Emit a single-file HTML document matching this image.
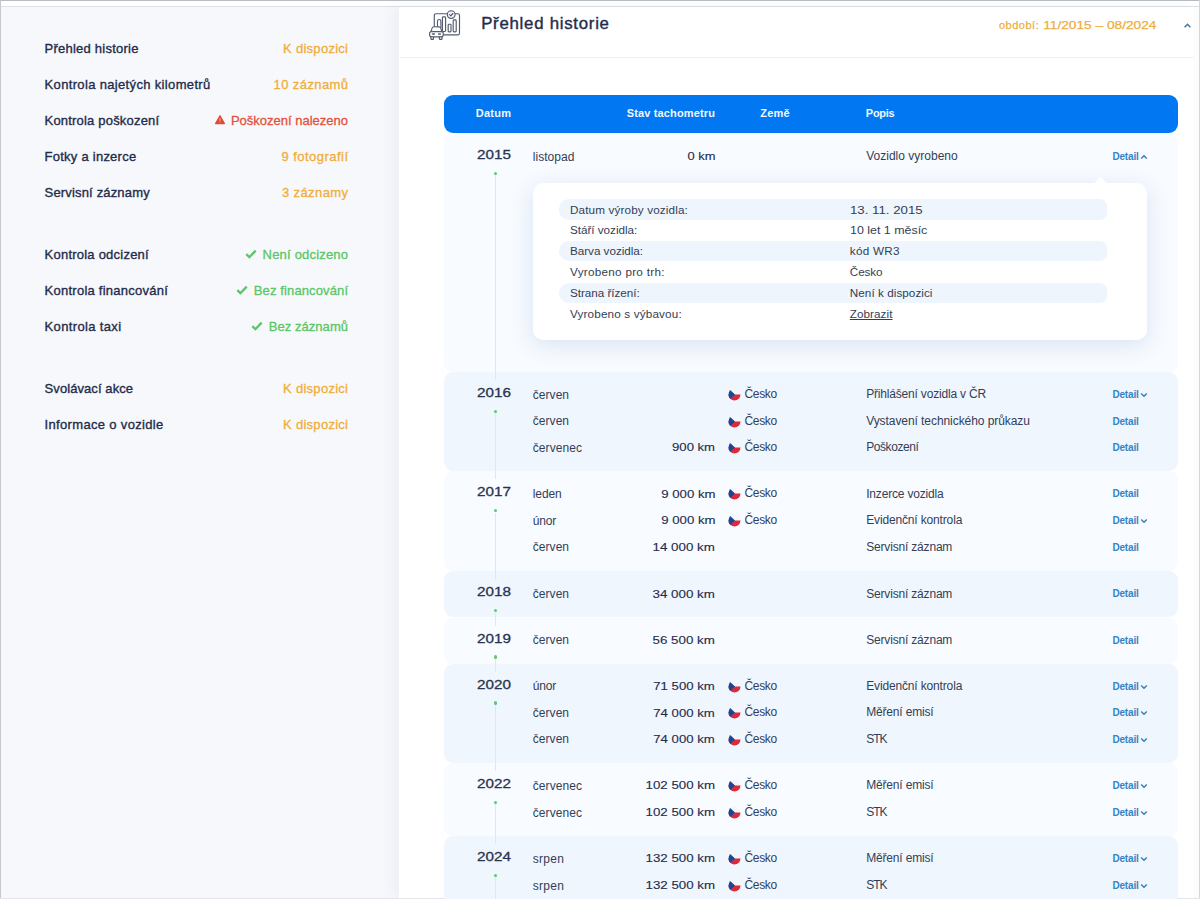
<!DOCTYPE html><html lang="cs"><head><meta charset="utf-8"><title>Přehled historie</title><style>
*{box-sizing:border-box;margin:0;padding:0}
html,body{width:1200px;height:899px;overflow:hidden;background:#f7f8fc;font-family:"Liberation Sans",sans-serif;color:#1f2c4b}
.abs{position:absolute;white-space:nowrap}
.t{position:absolute;white-space:nowrap}
#main{position:absolute;left:399px;top:7px;width:795px;height:892px;background:#fff;box-shadow:-6px 0 14px rgba(40,60,120,.05)}
.hd{position:absolute;left:444px;top:95px;width:734px;height:38px;background:#0178f2;border-radius:9px}
.blk{position:absolute;left:444px;width:734px;border-radius:9px}
.b0{background:#f8fbff}.b1{background:#f0f6fd}
.dot{position:absolute;width:3.4px;height:3.4px;border-radius:50%;background:#63c672;left:493.7px}
.ln{position:absolute;left:495px;width:1px;background:#e2e7ec}
.pop{position:absolute;left:533px;top:182.5px;width:614px;height:157px;background:#fff;border-radius:10px;box-shadow:0 5px 22px rgba(60,110,180,.17)}
.pr{position:absolute;left:558.5px;width:548.5px;height:20.5px;border-radius:10px 7px 7px 10px;background:#eef5fc}
</style></head><body>
<div class="abs" style="left:0;top:0;width:1200px;height:1px;background:#b9bcc3"></div>
<div class="abs" style="left:0;top:1px;width:1200px;height:5px;background:#fff"></div>
<div class="abs" style="left:0;top:6px;width:1200px;height:1px;background:#dcdfe5"></div>
<div id="main"></div>
<div class="abs" style="left:1194px;top:7px;width:5px;height:892px;background:#fcfcfd"></div>
<div class="abs" style="left:0;top:0;width:1px;height:899px;background:#c5c8cf"></div>
<div class="abs" style="left:1199px;top:0;width:1px;height:899px;background:#d4d6db"></div>
<div class="abs" style="left:0;top:898px;width:1200px;height:1px;background:#e3e5ea"></div>
<div class="abs" style="left:400px;top:57px;width:794px;height:1px;background:#eef0f4"></div>
<div class="t" style="top:38.50px;font-size:13px;line-height:20px;height:20px;letter-spacing:0.229px;-webkit-text-stroke:0.35px currentColor;left:44.60px;">Přehled historie</div>
<div class="t" style="top:38.50px;font-size:13px;line-height:20px;height:20px;letter-spacing:0.278px;color:#f0ad3a;-webkit-text-stroke:0.3px currentColor;right:851.72px;">K dispozici</div>
<div class="t" style="top:74.50px;font-size:13px;line-height:20px;height:20px;letter-spacing:0.340px;-webkit-text-stroke:0.35px currentColor;left:44.60px;">Kontrola najetých kilometrů</div>
<div class="t" style="top:74.50px;font-size:13px;line-height:20px;height:20px;letter-spacing:0.397px;color:#f0ad3a;-webkit-text-stroke:0.3px currentColor;right:851.60px;">10 záznamů</div>
<div class="t" style="top:110.50px;font-size:13px;line-height:20px;height:20px;letter-spacing:0.189px;-webkit-text-stroke:0.35px currentColor;left:44.60px;">Kontrola poškození</div>
<div class="t" style="top:110.50px;font-size:13px;line-height:20px;height:20px;color:#e4513b;-webkit-text-stroke:0.3px currentColor;right:852.00px;">Poškození nalezeno</div>
<svg class="abs" style="left:213.6px;top:114.4px" width="12" height="11" viewBox="0 0 12 11"><path d="M6 1.7 L10.4 9.5 H1.6 Z" fill="#e04a35" stroke="#e04a35" stroke-width="1.3" stroke-linejoin="round"/><rect x="5.55" y="4.2" width=".9" height="2.6" fill="#f6c9c2"/><rect x="5.55" y="7.5" width=".9" height=".9" fill="#f6c9c2"/></svg>
<div class="t" style="top:146.50px;font-size:13px;line-height:20px;height:20px;letter-spacing:0.243px;-webkit-text-stroke:0.35px currentColor;left:44.60px;">Fotky a inzerce</div>
<div class="t" style="top:146.50px;font-size:13px;line-height:20px;height:20px;letter-spacing:0.464px;color:#f0ad3a;-webkit-text-stroke:0.3px currentColor;right:851.54px;">9 fotografií</div>
<div class="t" style="top:182.50px;font-size:13px;line-height:20px;height:20px;letter-spacing:0.163px;-webkit-text-stroke:0.35px currentColor;left:44.60px;">Servisní záznamy</div>
<div class="t" style="top:182.50px;font-size:13px;line-height:20px;height:20px;letter-spacing:0.403px;color:#f0ad3a;-webkit-text-stroke:0.3px currentColor;right:851.60px;">3 záznamy</div>
<div class="t" style="top:245.00px;font-size:13px;line-height:20px;height:20px;letter-spacing:0.226px;-webkit-text-stroke:0.35px currentColor;left:44.60px;">Kontrola odcizení</div>
<div class="t" style="top:245.00px;font-size:13px;line-height:20px;height:20px;letter-spacing:0.190px;color:#58c764;-webkit-text-stroke:0.3px currentColor;right:851.81px;">Není odcizeno</div>
<svg class="abs" style="left:244.5px;top:248.5px" width="12" height="10" viewBox="0 0 12 10"><path d="M1.3 5.2 L4.4 8.2 L10.7 1.6" fill="none" stroke="#58c764" stroke-width="2.3"/></svg>
<div class="t" style="top:281.00px;font-size:13px;line-height:20px;height:20px;letter-spacing:0.248px;-webkit-text-stroke:0.35px currentColor;left:44.60px;">Kontrola financování</div>
<div class="t" style="top:281.00px;font-size:13px;line-height:20px;height:20px;letter-spacing:0.119px;color:#58c764;-webkit-text-stroke:0.3px currentColor;right:851.88px;">Bez financování</div>
<svg class="abs" style="left:235.8px;top:284.5px" width="12" height="10" viewBox="0 0 12 10"><path d="M1.3 5.2 L4.4 8.2 L10.7 1.6" fill="none" stroke="#58c764" stroke-width="2.3"/></svg>
<div class="t" style="top:317.00px;font-size:13px;line-height:20px;height:20px;letter-spacing:0.349px;-webkit-text-stroke:0.35px currentColor;left:44.60px;">Kontrola taxi</div>
<div class="t" style="top:317.00px;font-size:13px;line-height:20px;height:20px;letter-spacing:0.049px;color:#58c764;-webkit-text-stroke:0.3px currentColor;right:851.95px;">Bez záznamů</div>
<svg class="abs" style="left:250.8px;top:320.5px" width="12" height="10" viewBox="0 0 12 10"><path d="M1.3 5.2 L4.4 8.2 L10.7 1.6" fill="none" stroke="#58c764" stroke-width="2.3"/></svg>
<div class="t" style="top:378.80px;font-size:13px;line-height:20px;height:20px;letter-spacing:0.076px;-webkit-text-stroke:0.35px currentColor;left:44.60px;">Svolávací akce</div>
<div class="t" style="top:378.80px;font-size:13px;line-height:20px;height:20px;letter-spacing:0.278px;color:#f0ad3a;-webkit-text-stroke:0.3px currentColor;right:851.72px;">K dispozici</div>
<div class="t" style="top:414.90px;font-size:13px;line-height:20px;height:20px;letter-spacing:0.330px;-webkit-text-stroke:0.35px currentColor;left:44.60px;">Informace o vozidle</div>
<div class="t" style="top:414.90px;font-size:13px;line-height:20px;height:20px;letter-spacing:0.278px;color:#f0ad3a;-webkit-text-stroke:0.3px currentColor;right:851.72px;">K dispozici</div>
<svg class="abs" style="left:426px;top:8px" width="40" height="36" viewBox="0 0 40 36" fill="none" stroke="#525c70" stroke-width="1.15" stroke-linecap="round" stroke-linejoin="round">
<path d="M8.3 18.3 V7.2 a1.5 1.5 0 0 1 1.5-1.5 H21.2 M29.2 5.7 H32 a1.5 1.5 0 0 1 1.5 1.5 V25.3 a1.5 1.5 0 0 1-1.5 1.5 H17.9"/>
<circle cx="25.2" cy="6.6" r="3.9" fill="#eef1f6"/><path d="M23.6 6.7 l1.2 1.2 l2.1-2.4"/>
<path d="M11.5 18.2 V13.2 a1.7 1.7 0 0 1 3.4 0 V19.6"/>
<rect x="16.4" y="8.9" width="3.2" height="14.6" rx=".9"/><rect x="22.2" y="16.2" width="2.8" height="7.7" rx=".8"/><rect x="27.2" y="11.9" width="3" height="12" rx=".9"/>
<path d="M4.9 23.6 l1.3-3.7 a1.6 1.6 0 0 1 1.5-1.1 h5.4 a1.6 1.6 0 0 1 1.5 1.1 l1.3 3.7" fill="#fff"/>
<rect x="3.6" y="23.6" width="13.7" height="5.2" rx="2" fill="#fff"/>
<path d="M4.9 28.9 v1.9 a.6 .6 0 0 0 .6 .6 h1.4 a.6 .6 0 0 0 .6-.6 v-1.9 M13.4 28.9 v1.9 a.6 .6 0 0 0 .6 .6 h1.4 a.6 .6 0 0 0 .6-.6 v-1.9"/>
<path d="M6.5 26 h1.8 M12.6 26 h1.8" stroke-width="1.5"/>
</svg>
<div class="t" style="top:12.18px;font-size:16.8px;line-height:24px;height:24px;letter-spacing:0.743px;-webkit-text-stroke:0.4px currentColor;left:481.20px;">Přehled historie</div>
<div class="t" style="top:14.99px;font-size:11px;line-height:20px;height:20px;letter-spacing:0.500px;color:#f0ad3a;-webkit-text-stroke:0.25px currentColor;left:999.00px;">období:</div>
<div class="t" style="top:14.88px;font-size:11.3px;line-height:20px;height:20px;color:#f0ad3a;-webkit-text-stroke:0.25px currentColor;right:43.80px;transform:scaleX(1.2119);transform-origin:100% 0;">11/2015 – 08/2024</div>
<svg class="abs" style="left:1182.5px;top:21.5px" width="9" height="7" viewBox="0 0 9 7"><path d="M1.6 5.2 L4.5 2.3 L7.4 5.2" fill="none" stroke="#4a7aa0" stroke-width="1.6"/></svg>
<div class="blk b0" style="top:133px;height:239.3px"></div>
<div class="blk b1" style="top:372.3px;height:98.9px"></div>
<div class="blk b0" style="top:471.2px;height:100.0px"></div>
<div class="blk b1" style="top:571.2px;height:46.3px"></div>
<div class="blk b0" style="top:617.5px;height:46.0px"></div>
<div class="blk b1" style="top:663.5px;height:99.2px"></div>
<div class="blk b0" style="top:762.7px;height:73.0px"></div>
<div class="blk b1" style="top:835.7px;height:69.3px"></div>
<div class="hd"></div>
<div class="t" style="top:102.99px;font-size:11px;line-height:20px;height:20px;font-weight:700;letter-spacing:0.253px;color:#f1f7ff;left:475.80px;">Datum</div>
<div class="t" style="top:102.99px;font-size:11px;line-height:20px;height:20px;font-weight:700;letter-spacing:0.140px;color:#f1f7ff;right:484.96px;">Stav tachometru</div>
<div class="t" style="top:102.99px;font-size:11px;line-height:20px;height:20px;font-weight:700;letter-spacing:0.213px;color:#f1f7ff;left:760.30px;">Země</div>
<div class="t" style="top:102.99px;font-size:11px;line-height:20px;height:20px;font-weight:700;letter-spacing:-0.251px;color:#f1f7ff;left:865.80px;">Popis</div>
<div class="ln" style="top:175.0px;height:205.3px"></div>
<div class="ln" style="top:413.3px;height:66.2px"></div>
<div class="ln" style="top:512.5px;height:67.0px"></div>
<div class="ln" style="top:612.5px;height:13.2px"></div>
<div class="ln" style="top:658.7px;height:13.1px"></div>
<div class="ln" style="top:704.8px;height:66.3px"></div>
<div class="ln" style="top:804.1px;height:40.0px"></div>
<div class="ln" style="top:877.1px;height:22.9px"></div>
<div class="t" style="top:144.89px;font-size:13.3px;line-height:20px;height:20px;color:#27334f;-webkit-text-stroke:0.3px currentColor;left:476.60px;transform:scaleX(1.1489);transform-origin:0 0;">2015</div>
<div class="dot" style="top:171.6px"></div>
<div class="t" style="top:146.64px;font-size:12px;line-height:20px;height:20px;letter-spacing:0.028px;color:#333e56;left:532.80px;">listopad</div>
<div class="t" style="top:146.28px;font-size:11.3px;line-height:20px;height:20px;-webkit-text-stroke:0.12px currentColor;right:485.00px;transform:scaleX(1.1436);transform-origin:100% 0;">0 km</div>
<div class="t" style="top:146.04px;font-size:12px;line-height:20px;height:20px;letter-spacing:0.006px;color:#333e56;left:866.20px;">Vozidlo vyrobeno</div>
<div class="t" style="top:146.94px;font-size:10px;line-height:20px;height:20px;font-weight:700;letter-spacing:-0.156px;color:#3485c6;left:1112.40px;">Detail</div>
<svg class="abs" style="left:1140.3px;top:153.5px" width="8" height="6" viewBox="0 0 8 6"><path d="M1.2 4.4 L4 1.7 L6.8 4.4" fill="none" stroke="#3b7cb0" stroke-width="1.4"/></svg>
<div class="t" style="top:383.19px;font-size:13.3px;line-height:20px;height:20px;color:#27334f;-webkit-text-stroke:0.3px currentColor;left:476.60px;transform:scaleX(1.1489);transform-origin:0 0;">2016</div>
<div class="dot" style="top:409.9px"></div>
<div class="t" style="top:384.94px;font-size:12px;line-height:20px;height:20px;letter-spacing:0.045px;color:#333e56;left:532.80px;">červen</div>
<svg class="abs" style="left:727.6px;top:388.1px" width="13" height="13" viewBox="0 0 13 13"><defs><clipPath id="c1"><circle cx="6.5" cy="6.5" r="6"/></clipPath></defs><g clip-path="url(#c1)"><rect width="13" height="6.5" fill="#f4f6fa"/><rect y="6.5" width="13" height="6.5" fill="#dc2a3c"/><path d="M0 0 L7 6.5 L0 13 Z" fill="#1c4690"/></g></svg>
<div class="t" style="top:384.24px;font-size:12px;line-height:20px;height:20px;letter-spacing:-0.343px;color:#333e56;left:744.50px;">Česko</div>
<div class="t" style="top:384.34px;font-size:12px;line-height:20px;height:20px;letter-spacing:-0.185px;color:#333e56;left:866.20px;">Přihlášení vozidla v ČR</div>
<div class="t" style="top:385.24px;font-size:10px;line-height:20px;height:20px;font-weight:700;letter-spacing:-0.156px;color:#3485c6;left:1112.40px;">Detail</div>
<svg class="abs" style="left:1140.3px;top:392.2px" width="8" height="6" viewBox="0 0 8 6"><path d="M1.2 1.6 L4 4.3 L6.8 1.6" fill="none" stroke="#3b7cb0" stroke-width="1.4"/></svg>
<div class="t" style="top:411.34px;font-size:12px;line-height:20px;height:20px;letter-spacing:0.045px;color:#333e56;left:532.80px;">červen</div>
<svg class="abs" style="left:727.6px;top:414.5px" width="13" height="13" viewBox="0 0 13 13"><defs><clipPath id="c2"><circle cx="6.5" cy="6.5" r="6"/></clipPath></defs><g clip-path="url(#c2)"><rect width="13" height="6.5" fill="#f4f6fa"/><rect y="6.5" width="13" height="6.5" fill="#dc2a3c"/><path d="M0 0 L7 6.5 L0 13 Z" fill="#1c4690"/></g></svg>
<div class="t" style="top:410.64px;font-size:12px;line-height:20px;height:20px;letter-spacing:-0.343px;color:#333e56;left:744.50px;">Česko</div>
<div class="t" style="top:410.74px;font-size:12px;line-height:20px;height:20px;letter-spacing:-0.067px;color:#333e56;left:866.20px;">Vystavení technického průkazu</div>
<div class="t" style="top:411.63px;font-size:10px;line-height:20px;height:20px;font-weight:700;letter-spacing:-0.156px;color:#3485c6;left:1112.40px;">Detail</div>
<div class="t" style="top:437.74px;font-size:12px;line-height:20px;height:20px;letter-spacing:0.075px;color:#333e56;left:532.80px;">červenec</div>
<div class="t" style="top:437.38px;font-size:11.3px;line-height:20px;height:20px;-webkit-text-stroke:0.12px currentColor;right:485.00px;transform:scaleX(1.1607);transform-origin:100% 0;">900 km</div>
<svg class="abs" style="left:727.6px;top:440.9px" width="13" height="13" viewBox="0 0 13 13"><defs><clipPath id="c3"><circle cx="6.5" cy="6.5" r="6"/></clipPath></defs><g clip-path="url(#c3)"><rect width="13" height="6.5" fill="#f4f6fa"/><rect y="6.5" width="13" height="6.5" fill="#dc2a3c"/><path d="M0 0 L7 6.5 L0 13 Z" fill="#1c4690"/></g></svg>
<div class="t" style="top:437.04px;font-size:12px;line-height:20px;height:20px;letter-spacing:-0.343px;color:#333e56;left:744.50px;">Česko</div>
<div class="t" style="top:437.14px;font-size:12px;line-height:20px;height:20px;letter-spacing:-0.416px;color:#333e56;left:866.20px;">Poškození</div>
<div class="t" style="top:438.04px;font-size:10px;line-height:20px;height:20px;font-weight:700;letter-spacing:-0.156px;color:#3485c6;left:1112.40px;">Detail</div>
<div class="t" style="top:482.39px;font-size:13.3px;line-height:20px;height:20px;color:#27334f;-webkit-text-stroke:0.3px currentColor;left:476.60px;transform:scaleX(1.1489);transform-origin:0 0;">2017</div>
<div class="dot" style="top:509.1px"></div>
<div class="t" style="top:484.14px;font-size:12px;line-height:20px;height:20px;letter-spacing:-0.095px;color:#333e56;left:532.80px;">leden</div>
<div class="t" style="top:483.78px;font-size:11.3px;line-height:20px;height:20px;-webkit-text-stroke:0.12px currentColor;right:485.00px;transform:scaleX(1.1664);transform-origin:100% 0;">9 000 km</div>
<svg class="abs" style="left:727.6px;top:487.3px" width="13" height="13" viewBox="0 0 13 13"><defs><clipPath id="c4"><circle cx="6.5" cy="6.5" r="6"/></clipPath></defs><g clip-path="url(#c4)"><rect width="13" height="6.5" fill="#f4f6fa"/><rect y="6.5" width="13" height="6.5" fill="#dc2a3c"/><path d="M0 0 L7 6.5 L0 13 Z" fill="#1c4690"/></g></svg>
<div class="t" style="top:483.44px;font-size:12px;line-height:20px;height:20px;letter-spacing:-0.343px;color:#333e56;left:744.50px;">Česko</div>
<div class="t" style="top:483.54px;font-size:12px;line-height:20px;height:20px;letter-spacing:-0.183px;color:#333e56;left:866.20px;">Inzerce vozidla</div>
<div class="t" style="top:484.44px;font-size:10px;line-height:20px;height:20px;font-weight:700;letter-spacing:-0.156px;color:#3485c6;left:1112.40px;">Detail</div>
<div class="t" style="top:510.74px;font-size:12px;line-height:20px;height:20px;letter-spacing:-0.158px;color:#333e56;left:532.80px;">únor</div>
<div class="t" style="top:510.38px;font-size:11.3px;line-height:20px;height:20px;-webkit-text-stroke:0.12px currentColor;right:485.00px;transform:scaleX(1.1664);transform-origin:100% 0;">9 000 km</div>
<svg class="abs" style="left:727.6px;top:513.9px" width="13" height="13" viewBox="0 0 13 13"><defs><clipPath id="c5"><circle cx="6.5" cy="6.5" r="6"/></clipPath></defs><g clip-path="url(#c5)"><rect width="13" height="6.5" fill="#f4f6fa"/><rect y="6.5" width="13" height="6.5" fill="#dc2a3c"/><path d="M0 0 L7 6.5 L0 13 Z" fill="#1c4690"/></g></svg>
<div class="t" style="top:510.04px;font-size:12px;line-height:20px;height:20px;letter-spacing:-0.343px;color:#333e56;left:744.50px;">Česko</div>
<div class="t" style="top:510.14px;font-size:12px;line-height:20px;height:20px;letter-spacing:-0.152px;color:#333e56;left:866.20px;">Evidenční kontrola</div>
<div class="t" style="top:511.04px;font-size:10px;line-height:20px;height:20px;font-weight:700;letter-spacing:-0.156px;color:#3485c6;left:1112.40px;">Detail</div>
<svg class="abs" style="left:1140.3px;top:518.0px" width="8" height="6" viewBox="0 0 8 6"><path d="M1.2 1.6 L4 4.3 L6.8 1.6" fill="none" stroke="#3b7cb0" stroke-width="1.4"/></svg>
<div class="t" style="top:537.44px;font-size:12px;line-height:20px;height:20px;letter-spacing:0.045px;color:#333e56;left:532.80px;">červen</div>
<div class="t" style="top:537.08px;font-size:11.3px;line-height:20px;height:20px;-webkit-text-stroke:0.12px currentColor;right:485.00px;transform:scaleX(1.1788);transform-origin:100% 0;">14 000 km</div>
<div class="t" style="top:536.84px;font-size:12px;line-height:20px;height:20px;letter-spacing:-0.180px;color:#333e56;left:866.20px;">Servisní záznam</div>
<div class="t" style="top:537.73px;font-size:10px;line-height:20px;height:20px;font-weight:700;letter-spacing:-0.156px;color:#3485c6;left:1112.40px;">Detail</div>
<div class="t" style="top:582.39px;font-size:13.3px;line-height:20px;height:20px;color:#27334f;-webkit-text-stroke:0.3px currentColor;left:476.60px;transform:scaleX(1.1489);transform-origin:0 0;">2018</div>
<div class="dot" style="top:609.1px"></div>
<div class="t" style="top:584.14px;font-size:12px;line-height:20px;height:20px;letter-spacing:0.045px;color:#333e56;left:532.80px;">červen</div>
<div class="t" style="top:583.78px;font-size:11.3px;line-height:20px;height:20px;-webkit-text-stroke:0.12px currentColor;right:485.00px;transform:scaleX(1.1788);transform-origin:100% 0;">34 000 km</div>
<div class="t" style="top:583.54px;font-size:12px;line-height:20px;height:20px;letter-spacing:-0.180px;color:#333e56;left:866.20px;">Servisní záznam</div>
<div class="t" style="top:584.43px;font-size:10px;line-height:20px;height:20px;font-weight:700;letter-spacing:-0.156px;color:#3485c6;left:1112.40px;">Detail</div>
<div class="t" style="top:628.59px;font-size:13.3px;line-height:20px;height:20px;color:#27334f;-webkit-text-stroke:0.3px currentColor;left:476.60px;transform:scaleX(1.1489);transform-origin:0 0;">2019</div>
<div class="dot" style="top:655.3px"></div>
<div class="t" style="top:630.34px;font-size:12px;line-height:20px;height:20px;letter-spacing:0.045px;color:#333e56;left:532.80px;">červen</div>
<div class="t" style="top:629.98px;font-size:11.3px;line-height:20px;height:20px;-webkit-text-stroke:0.12px currentColor;right:485.00px;transform:scaleX(1.1788);transform-origin:100% 0;">56 500 km</div>
<div class="t" style="top:629.74px;font-size:12px;line-height:20px;height:20px;letter-spacing:-0.180px;color:#333e56;left:866.20px;">Servisní záznam</div>
<div class="t" style="top:630.63px;font-size:10px;line-height:20px;height:20px;font-weight:700;letter-spacing:-0.156px;color:#3485c6;left:1112.40px;">Detail</div>
<div class="t" style="top:674.69px;font-size:13.3px;line-height:20px;height:20px;color:#27334f;-webkit-text-stroke:0.3px currentColor;left:476.60px;transform:scaleX(1.1489);transform-origin:0 0;">2020</div>
<div class="dot" style="top:701.4px"></div>
<div class="t" style="top:676.44px;font-size:12px;line-height:20px;height:20px;letter-spacing:-0.158px;color:#333e56;left:532.80px;">únor</div>
<div class="t" style="top:676.08px;font-size:11.3px;line-height:20px;height:20px;-webkit-text-stroke:0.12px currentColor;right:485.00px;transform:scaleX(1.1655);transform-origin:100% 0;">71 500 km</div>
<svg class="abs" style="left:727.6px;top:679.6px" width="13" height="13" viewBox="0 0 13 13"><defs><clipPath id="c6"><circle cx="6.5" cy="6.5" r="6"/></clipPath></defs><g clip-path="url(#c6)"><rect width="13" height="6.5" fill="#f4f6fa"/><rect y="6.5" width="13" height="6.5" fill="#dc2a3c"/><path d="M0 0 L7 6.5 L0 13 Z" fill="#1c4690"/></g></svg>
<div class="t" style="top:675.74px;font-size:12px;line-height:20px;height:20px;letter-spacing:-0.343px;color:#333e56;left:744.50px;">Česko</div>
<div class="t" style="top:675.84px;font-size:12px;line-height:20px;height:20px;letter-spacing:-0.152px;color:#333e56;left:866.20px;">Evidenční kontrola</div>
<div class="t" style="top:676.73px;font-size:10px;line-height:20px;height:20px;font-weight:700;letter-spacing:-0.156px;color:#3485c6;left:1112.40px;">Detail</div>
<svg class="abs" style="left:1140.3px;top:683.7px" width="8" height="6" viewBox="0 0 8 6"><path d="M1.2 1.6 L4 4.3 L6.8 1.6" fill="none" stroke="#3b7cb0" stroke-width="1.4"/></svg>
<div class="t" style="top:702.94px;font-size:12px;line-height:20px;height:20px;letter-spacing:0.045px;color:#333e56;left:532.80px;">červen</div>
<div class="t" style="top:702.58px;font-size:11.3px;line-height:20px;height:20px;-webkit-text-stroke:0.12px currentColor;right:485.00px;transform:scaleX(1.1655);transform-origin:100% 0;">74 000 km</div>
<svg class="abs" style="left:727.6px;top:706.1px" width="13" height="13" viewBox="0 0 13 13"><defs><clipPath id="c7"><circle cx="6.5" cy="6.5" r="6"/></clipPath></defs><g clip-path="url(#c7)"><rect width="13" height="6.5" fill="#f4f6fa"/><rect y="6.5" width="13" height="6.5" fill="#dc2a3c"/><path d="M0 0 L7 6.5 L0 13 Z" fill="#1c4690"/></g></svg>
<div class="t" style="top:702.24px;font-size:12px;line-height:20px;height:20px;letter-spacing:-0.343px;color:#333e56;left:744.50px;">Česko</div>
<div class="t" style="top:702.34px;font-size:12px;line-height:20px;height:20px;letter-spacing:-0.172px;color:#333e56;left:866.20px;">Měření emisí</div>
<div class="t" style="top:703.23px;font-size:10px;line-height:20px;height:20px;font-weight:700;letter-spacing:-0.156px;color:#3485c6;left:1112.40px;">Detail</div>
<svg class="abs" style="left:1140.3px;top:710.2px" width="8" height="6" viewBox="0 0 8 6"><path d="M1.2 1.6 L4 4.3 L6.8 1.6" fill="none" stroke="#3b7cb0" stroke-width="1.4"/></svg>
<div class="t" style="top:729.44px;font-size:12px;line-height:20px;height:20px;letter-spacing:0.045px;color:#333e56;left:532.80px;">červen</div>
<div class="t" style="top:729.08px;font-size:11.3px;line-height:20px;height:20px;-webkit-text-stroke:0.12px currentColor;right:485.00px;transform:scaleX(1.1655);transform-origin:100% 0;">74 000 km</div>
<svg class="abs" style="left:727.6px;top:732.6px" width="13" height="13" viewBox="0 0 13 13"><defs><clipPath id="c8"><circle cx="6.5" cy="6.5" r="6"/></clipPath></defs><g clip-path="url(#c8)"><rect width="13" height="6.5" fill="#f4f6fa"/><rect y="6.5" width="13" height="6.5" fill="#dc2a3c"/><path d="M0 0 L7 6.5 L0 13 Z" fill="#1c4690"/></g></svg>
<div class="t" style="top:728.74px;font-size:12px;line-height:20px;height:20px;letter-spacing:-0.343px;color:#333e56;left:744.50px;">Česko</div>
<div class="t" style="top:728.84px;font-size:12px;line-height:20px;height:20px;letter-spacing:-1.015px;color:#333e56;left:866.20px;">STK</div>
<div class="t" style="top:729.73px;font-size:10px;line-height:20px;height:20px;font-weight:700;letter-spacing:-0.156px;color:#3485c6;left:1112.40px;">Detail</div>
<svg class="abs" style="left:1140.3px;top:736.7px" width="8" height="6" viewBox="0 0 8 6"><path d="M1.2 1.6 L4 4.3 L6.8 1.6" fill="none" stroke="#3b7cb0" stroke-width="1.4"/></svg>
<div class="t" style="top:773.99px;font-size:13.3px;line-height:20px;height:20px;color:#27334f;-webkit-text-stroke:0.3px currentColor;left:476.60px;transform:scaleX(1.1489);transform-origin:0 0;">2022</div>
<div class="dot" style="top:800.7px"></div>
<div class="t" style="top:775.74px;font-size:12px;line-height:20px;height:20px;letter-spacing:0.075px;color:#333e56;left:532.80px;">červenec</div>
<div class="t" style="top:775.38px;font-size:11.3px;line-height:20px;height:20px;-webkit-text-stroke:0.12px currentColor;right:485.00px;transform:scaleX(1.1770);transform-origin:100% 0;">102 500 km</div>
<svg class="abs" style="left:727.6px;top:778.9px" width="13" height="13" viewBox="0 0 13 13"><defs><clipPath id="c9"><circle cx="6.5" cy="6.5" r="6"/></clipPath></defs><g clip-path="url(#c9)"><rect width="13" height="6.5" fill="#f4f6fa"/><rect y="6.5" width="13" height="6.5" fill="#dc2a3c"/><path d="M0 0 L7 6.5 L0 13 Z" fill="#1c4690"/></g></svg>
<div class="t" style="top:775.04px;font-size:12px;line-height:20px;height:20px;letter-spacing:-0.343px;color:#333e56;left:744.50px;">Česko</div>
<div class="t" style="top:775.14px;font-size:12px;line-height:20px;height:20px;letter-spacing:-0.172px;color:#333e56;left:866.20px;">Měření emisí</div>
<div class="t" style="top:776.03px;font-size:10px;line-height:20px;height:20px;font-weight:700;letter-spacing:-0.156px;color:#3485c6;left:1112.40px;">Detail</div>
<svg class="abs" style="left:1140.3px;top:783.0px" width="8" height="6" viewBox="0 0 8 6"><path d="M1.2 1.6 L4 4.3 L6.8 1.6" fill="none" stroke="#3b7cb0" stroke-width="1.4"/></svg>
<div class="t" style="top:802.54px;font-size:12px;line-height:20px;height:20px;letter-spacing:0.075px;color:#333e56;left:532.80px;">červenec</div>
<div class="t" style="top:802.18px;font-size:11.3px;line-height:20px;height:20px;-webkit-text-stroke:0.12px currentColor;right:485.00px;transform:scaleX(1.1770);transform-origin:100% 0;">102 500 km</div>
<svg class="abs" style="left:727.6px;top:805.7px" width="13" height="13" viewBox="0 0 13 13"><defs><clipPath id="c10"><circle cx="6.5" cy="6.5" r="6"/></clipPath></defs><g clip-path="url(#c10)"><rect width="13" height="6.5" fill="#f4f6fa"/><rect y="6.5" width="13" height="6.5" fill="#dc2a3c"/><path d="M0 0 L7 6.5 L0 13 Z" fill="#1c4690"/></g></svg>
<div class="t" style="top:801.84px;font-size:12px;line-height:20px;height:20px;letter-spacing:-0.343px;color:#333e56;left:744.50px;">Česko</div>
<div class="t" style="top:801.94px;font-size:12px;line-height:20px;height:20px;letter-spacing:-1.015px;color:#333e56;left:866.20px;">STK</div>
<div class="t" style="top:802.83px;font-size:10px;line-height:20px;height:20px;font-weight:700;letter-spacing:-0.156px;color:#3485c6;left:1112.40px;">Detail</div>
<svg class="abs" style="left:1140.3px;top:809.8px" width="8" height="6" viewBox="0 0 8 6"><path d="M1.2 1.6 L4 4.3 L6.8 1.6" fill="none" stroke="#3b7cb0" stroke-width="1.4"/></svg>
<div class="t" style="top:846.99px;font-size:13.3px;line-height:20px;height:20px;color:#27334f;-webkit-text-stroke:0.3px currentColor;left:476.60px;transform:scaleX(1.1489);transform-origin:0 0;">2024</div>
<div class="dot" style="top:873.7px"></div>
<div class="t" style="top:848.74px;font-size:12px;line-height:20px;height:20px;letter-spacing:0.254px;color:#333e56;left:532.80px;">srpen</div>
<div class="t" style="top:848.38px;font-size:11.3px;line-height:20px;height:20px;-webkit-text-stroke:0.12px currentColor;right:485.00px;transform:scaleX(1.1770);transform-origin:100% 0;">132 500 km</div>
<svg class="abs" style="left:727.6px;top:851.9px" width="13" height="13" viewBox="0 0 13 13"><defs><clipPath id="c11"><circle cx="6.5" cy="6.5" r="6"/></clipPath></defs><g clip-path="url(#c11)"><rect width="13" height="6.5" fill="#f4f6fa"/><rect y="6.5" width="13" height="6.5" fill="#dc2a3c"/><path d="M0 0 L7 6.5 L0 13 Z" fill="#1c4690"/></g></svg>
<div class="t" style="top:848.04px;font-size:12px;line-height:20px;height:20px;letter-spacing:-0.343px;color:#333e56;left:744.50px;">Česko</div>
<div class="t" style="top:848.14px;font-size:12px;line-height:20px;height:20px;letter-spacing:-0.172px;color:#333e56;left:866.20px;">Měření emisí</div>
<div class="t" style="top:849.03px;font-size:10px;line-height:20px;height:20px;font-weight:700;letter-spacing:-0.156px;color:#3485c6;left:1112.40px;">Detail</div>
<svg class="abs" style="left:1140.3px;top:856.0px" width="8" height="6" viewBox="0 0 8 6"><path d="M1.2 1.6 L4 4.3 L6.8 1.6" fill="none" stroke="#3b7cb0" stroke-width="1.4"/></svg>
<div class="t" style="top:875.64px;font-size:12px;line-height:20px;height:20px;letter-spacing:0.254px;color:#333e56;left:532.80px;">srpen</div>
<div class="t" style="top:875.28px;font-size:11.3px;line-height:20px;height:20px;-webkit-text-stroke:0.12px currentColor;right:485.00px;transform:scaleX(1.1770);transform-origin:100% 0;">132 500 km</div>
<svg class="abs" style="left:727.6px;top:878.8px" width="13" height="13" viewBox="0 0 13 13"><defs><clipPath id="c12"><circle cx="6.5" cy="6.5" r="6"/></clipPath></defs><g clip-path="url(#c12)"><rect width="13" height="6.5" fill="#f4f6fa"/><rect y="6.5" width="13" height="6.5" fill="#dc2a3c"/><path d="M0 0 L7 6.5 L0 13 Z" fill="#1c4690"/></g></svg>
<div class="t" style="top:874.94px;font-size:12px;line-height:20px;height:20px;letter-spacing:-0.343px;color:#333e56;left:744.50px;">Česko</div>
<div class="t" style="top:875.04px;font-size:12px;line-height:20px;height:20px;letter-spacing:-1.015px;color:#333e56;left:866.20px;">STK</div>
<div class="t" style="top:875.93px;font-size:10px;line-height:20px;height:20px;font-weight:700;letter-spacing:-0.156px;color:#3485c6;left:1112.40px;">Detail</div>
<svg class="abs" style="left:1140.3px;top:882.9px" width="8" height="6" viewBox="0 0 8 6"><path d="M1.2 1.6 L4 4.3 L6.8 1.6" fill="none" stroke="#3b7cb0" stroke-width="1.4"/></svg>
<div class="pop"></div>
<svg class="abs" style="left:1092.5px;top:176px" width="15" height="8" viewBox="0 0 15 8"><path d="M0.5 8 L6.6 1.4 Q7.5 0.5 8.4 1.4 L14.5 8 Z" fill="#fff"/></svg>
<div class="pr" style="top:199.2px"></div>
<div class="t" style="top:199.55px;font-size:11.7px;line-height:20px;height:20px;letter-spacing:0.144px;color:#333e56;left:570.00px;">Datum výroby vozidla:</div>
<div class="t" style="top:199.55px;font-size:11.7px;line-height:20px;height:20px;color:#333e56;left:849.80px;transform:scaleX(1.1337);transform-origin:0 0;">13. 11. 2015</div>
<div class="t" style="top:220.38px;font-size:11.7px;line-height:20px;height:20px;letter-spacing:-0.026px;color:#333e56;left:570.00px;">Stáří vozidla:</div>
<div class="t" style="top:220.38px;font-size:11.7px;line-height:20px;height:20px;color:#333e56;left:849.80px;transform:scaleX(1.0623);transform-origin:0 0;">10 let 1 měsíc</div>
<div class="pr" style="top:240.9px"></div>
<div class="t" style="top:241.21px;font-size:11.7px;line-height:20px;height:20px;letter-spacing:-0.030px;color:#333e56;left:570.00px;">Barva vozidla:</div>
<div class="t" style="top:241.21px;font-size:11.7px;line-height:20px;height:20px;letter-spacing:0.275px;color:#333e56;left:849.80px;">kód WR3</div>
<div class="t" style="top:262.04px;font-size:11.7px;line-height:20px;height:20px;letter-spacing:0.284px;color:#333e56;left:570.00px;">Vyrobeno pro trh:</div>
<div class="t" style="top:262.04px;font-size:11.7px;line-height:20px;height:20px;letter-spacing:-0.088px;color:#333e56;left:849.80px;">Česko</div>
<div class="pr" style="top:282.5px"></div>
<div class="t" style="top:282.87px;font-size:11.7px;line-height:20px;height:20px;letter-spacing:-0.034px;color:#333e56;left:570.00px;">Strana řízení:</div>
<div class="t" style="top:282.87px;font-size:11.7px;line-height:20px;height:20px;letter-spacing:0.053px;color:#333e56;left:849.80px;">Není k dispozici</div>
<div class="t" style="top:303.70px;font-size:11.7px;line-height:20px;height:20px;letter-spacing:0.162px;color:#333e56;left:570.00px;">Vyrobeno s výbavou:</div>
<div class="t" style="top:303.70px;font-size:11.7px;line-height:20px;height:20px;letter-spacing:0.058px;color:#333e56;left:849.80px;"><u>Zobrazit</u></div>
</body></html>
